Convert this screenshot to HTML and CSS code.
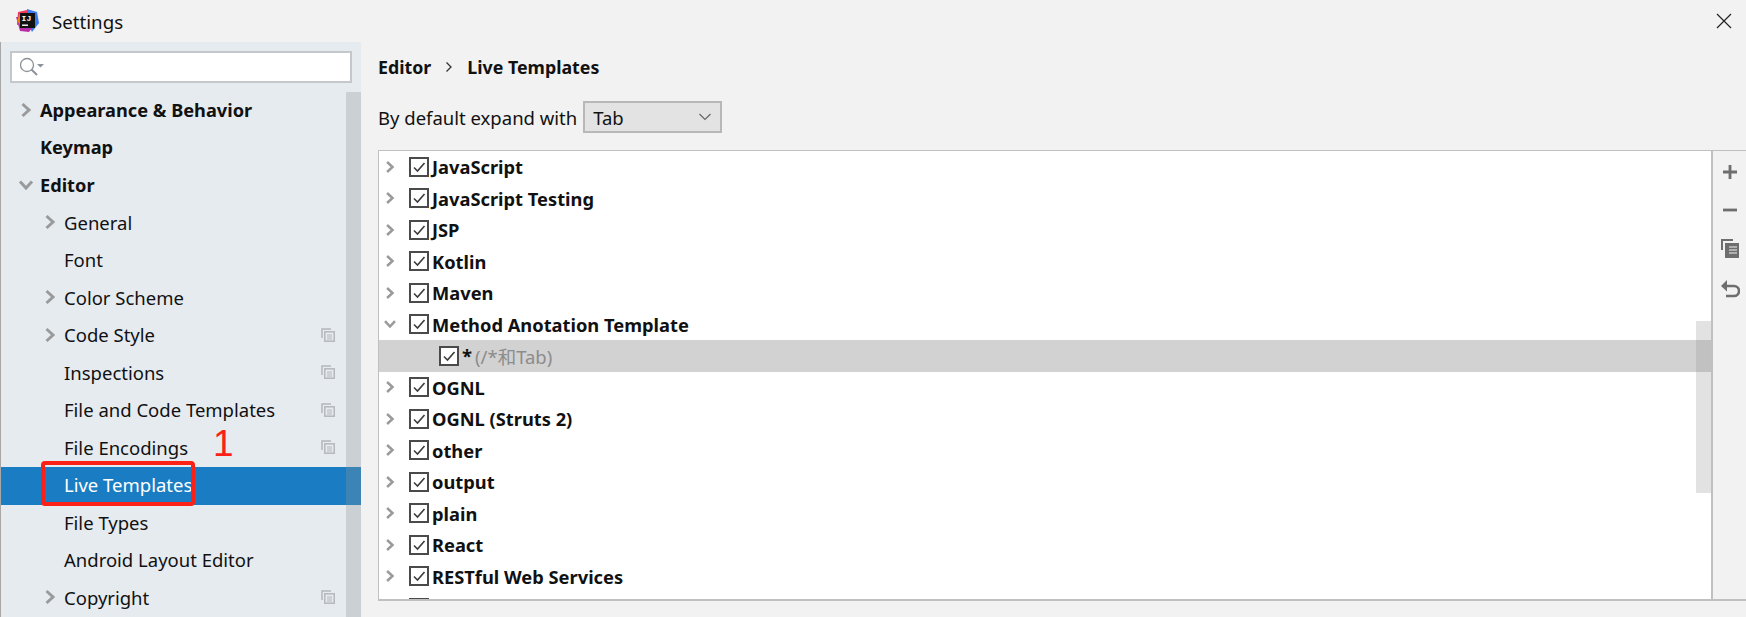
FILE: index.html
```html
<!DOCTYPE html>
<html lang="en">
<head>
    <meta charset="UTF-8">
    <meta name="viewport" content="width=device-width, initial-scale=1.0">
    <title>Settings</title>
    <link rel="stylesheet" href="styles.css">
</head>
<body>
    <svg width="0" height="0" class="defs">
        <symbol id="arrow-right" viewBox="0 0 12 16"><path d="M2.500 2l6.500 6-6.500 6" fill="none" stroke="#9a9a9a" stroke-width="3"/></symbol>
        <symbol id="arrow-down" viewBox="0 0 16 12"><path d="M2 2.500l6 6.500 6-6.500" fill="none" stroke="#9a9a9a" stroke-width="3"/></symbol>
        <symbol id="check" viewBox="0 0 20 20"><rect x="1" y="1" width="18" height="18" fill="#fff" stroke="#4a4a4a" stroke-width="2"/><path d="M5 10.500l3.500 3.500 7-8" fill="none" stroke="#3c3c3c" stroke-width="1.600"/></symbol>
        <symbol id="project" viewBox="0 0 14 14"><path d="M1 10V1h9" fill="none" stroke="#b4b8bc" stroke-width="1.500"/><rect x="3.800" y="3.800" width="9.400" height="9.400" fill="none" stroke="#b4b8bc" stroke-width="1.500"/><path d="M6 7h5M6 9h5M6 11h5" stroke="#b4b8bc"/></symbol>
    </svg>

    <div class="titlebar">
        <svg class="logo" width="24" height="24" viewBox="0 0 24 24">
            <path d="M3 3l9-2 1 12-11 3z" fill="#f5365c"/>
            <path d="M12 0l10 3 2 11-7 9-5-10z" fill="#3d7cf0"/>
            <path d="M1 8l4 14 9 1 3-4-11-11z" fill="#b82ea8"/>
            <path d="M2 12l3-8 5 1-4 12z" fill="#f97a12"/>
            <rect x="5" y="4" width="15" height="15" fill="#111"/>
            <rect x="7" y="15.500" width="6" height="1.400" fill="#fff"/>
            <text x="6.600" y="11.500" class="logo-text">IJ</text>
        </svg>
        <span class="title">Settings</span>
        <svg class="close" width="16" height="16" viewBox="0 0 16 16"><path d="M1 1l14 14M15 1L1 15" stroke="#222" stroke-width="1.200"/></svg>
    </div>

    <div class="content">
        <div class="sidebar">
            <div class="search">
                <svg width="26" height="20" viewBox="0 0 26 20">
                    <circle cx="7" cy="8" r="6.500" fill="none" stroke="#8c9299" stroke-width="1.300"/>
                    <path d="M11.500 12.500l5.500 5.500" stroke="#8c9299" stroke-width="2"/>
                    <path d="M17 7h7l-3.500 3.500z" fill="#8c9299"/>
                </svg>
            </div>
            <div class="nav">
                <div class="nav-scroll"></div>
                <div class="nav-row bold"><svg class="arrow"><use href="#arrow-right"/></svg>Appearance &amp; Behavior</div>
                <div class="nav-row bold"><span class="arrow"></span>Keymap</div>
                <div class="nav-row bold"><svg class="arrow arrow-open"><use href="#arrow-down"/></svg>Editor</div>
                <div class="nav-row sub"><svg class="arrow"><use href="#arrow-right"/></svg>General</div>
                <div class="nav-row sub"><span class="arrow"></span>Font</div>
                <div class="nav-row sub"><svg class="arrow"><use href="#arrow-right"/></svg>Color Scheme</div>
                <div class="nav-row sub"><svg class="arrow"><use href="#arrow-right"/></svg>Code Style<svg class="project"><use href="#project"/></svg></div>
                <div class="nav-row sub"><span class="arrow"></span>Inspections<svg class="project"><use href="#project"/></svg></div>
                <div class="nav-row sub"><span class="arrow"></span>File and Code Templates<svg class="project"><use href="#project"/></svg></div>
                <div class="nav-row sub"><span class="arrow"></span>File Encodings<svg class="project"><use href="#project"/></svg></div>
                <div class="nav-row sub selected"><span class="arrow"></span>Live Templates</div>
                <div class="nav-row sub"><span class="arrow"></span>File Types</div>
                <div class="nav-row sub"><span class="arrow"></span>Android Layout Editor</div>
                <div class="nav-row sub"><svg class="arrow"><use href="#arrow-right"/></svg>Copyright<svg class="project"><use href="#project"/></svg></div>
                <div class="mark-box"></div>
                <div class="mark-num">1</div>
            </div>
        </div>

        <div class="main">
            <div class="breadcrumb">
                <span>Editor</span>
                <svg width="8" height="12" viewBox="0 0 8 12"><path d="M1.500 1.500l4.500 4.500-4.500 4.500" fill="none" stroke="#333" stroke-width="1.300"/></svg>
                <span>Live Templates</span>
            </div>
            <div class="expand">
                <span>By default expand with</span>
                <div class="select">
                    <span>Tab</span>
                    <svg width="14" height="8" viewBox="0 0 14 8"><path d="M1.500 1l5.500 5.500L12.500 1" fill="none" stroke="#666" stroke-width="1.200"/></svg>
                </div>
            </div>
            <div class="panel">
                <div class="tree">
                    <div class="tree-scroll"></div>
                    <div class="tree-row"><svg class="tw"><use href="#arrow-right"/></svg><svg class="cb"><use href="#check"/></svg>JavaScript</div>
                    <div class="tree-row"><svg class="tw"><use href="#arrow-right"/></svg><svg class="cb"><use href="#check"/></svg>JavaScript Testing</div>
                    <div class="tree-row"><svg class="tw"><use href="#arrow-right"/></svg><svg class="cb"><use href="#check"/></svg>JSP</div>
                    <div class="tree-row"><svg class="tw"><use href="#arrow-right"/></svg><svg class="cb"><use href="#check"/></svg>Kotlin</div>
                    <div class="tree-row"><svg class="tw"><use href="#arrow-right"/></svg><svg class="cb"><use href="#check"/></svg>Maven</div>
                    <div class="tree-row"><svg class="tw tw-open"><use href="#arrow-down"/></svg><svg class="cb"><use href="#check"/></svg>Method Anotation Template</div>
                    <div class="tree-row child"><svg class="cb"><use href="#check"/></svg><b>*</b><span class="hint">(/*和Tab)</span></div>
                    <div class="tree-row"><svg class="tw"><use href="#arrow-right"/></svg><svg class="cb"><use href="#check"/></svg>OGNL</div>
                    <div class="tree-row"><svg class="tw"><use href="#arrow-right"/></svg><svg class="cb"><use href="#check"/></svg>OGNL (Struts 2)</div>
                    <div class="tree-row"><svg class="tw"><use href="#arrow-right"/></svg><svg class="cb"><use href="#check"/></svg>other</div>
                    <div class="tree-row"><svg class="tw"><use href="#arrow-right"/></svg><svg class="cb"><use href="#check"/></svg>output</div>
                    <div class="tree-row"><svg class="tw"><use href="#arrow-right"/></svg><svg class="cb"><use href="#check"/></svg>plain</div>
                    <div class="tree-row"><svg class="tw"><use href="#arrow-right"/></svg><svg class="cb"><use href="#check"/></svg>React</div>
                    <div class="tree-row"><svg class="tw"><use href="#arrow-right"/></svg><svg class="cb"><use href="#check"/></svg>RESTful Web Services</div>
                    <div class="tree-row"><svg class="tw"><use href="#arrow-right"/></svg><svg class="cb"><use href="#check"/></svg></div>
                </div>
                <div class="tools">
                    <svg width="18" height="18" viewBox="0 0 18 18"><path d="M9 2v14M2 9h14" stroke="#6e6e6e" stroke-width="2.800"/></svg>
                    <svg width="18" height="18" viewBox="0 0 18 18"><path d="M2 9h14" stroke="#6e6e6e" stroke-width="2.800"/></svg>
                    <svg width="18" height="20" viewBox="0 0 18 20"><path d="M1 11V1h11" fill="none" stroke="#6e6e6e" stroke-width="2"/><rect x="4" y="4" width="14" height="15" fill="#6e6e6e"/><path d="M8 8h8M8 11h8M8 14h8" stroke="#f2f2f2" stroke-width="1.200"/></svg>
                    <svg width="20" height="20" viewBox="0 0 20 20"><path d="M5 7h9a4.500 4.500 0 0 1 0 10H6" fill="none" stroke="#6e6e6e" stroke-width="2.600"/><path d="M7 1L1 7l6 5.500z" fill="#6e6e6e"/></svg>
                </div>
            </div>
        </div>
    </div>
</body>
</html>
```

FILE: styles.css
```css
html, body {
    height: 100%;
}
body {
    margin: 0;
    height: 617px;
    overflow: hidden;
    display: flex;
    flex-direction: column;
    background: #f2f2f2;
    color: #111;
    font-family: "Noto Sans", "Noto Sans CJK SC", sans-serif;
    font-size: 18.5px;
}
.defs {
    display: none;
}

/* title bar */
.titlebar {
    height: 42px;
    flex: none;
    display: flex;
    align-items: center;
    padding-left: 15px;
    padding-right: 14px;
}
.logo {
    margin-right: 13px;
}
.logo-text {
    font-family: "Liberation Mono", monospace;
    font-size: 8px;
    font-weight: bold;
    fill: #fff;
}
.title {
    font-size: 18.7px;
}
.close {
    margin-left: auto;
}

/* left side */
.content {
    flex: 1;
    display: flex;
    min-height: 0;
}
.sidebar {
    width: 360px;
    flex: none;
    background: #e6ebf0;
    border-left: 1px solid #a8a8a8;
    display: flex;
    flex-direction: column;
}
.search {
    height: 33px;
    margin: 9px 9px 0 9px;
    box-sizing: border-box;
    background: #fff;
    border: 2px solid #c4c8cc;
    display: flex;
    align-items: center;
    padding-left: 8px;
}
.nav {
    position: relative;
    flex: 1;
    margin-top: 7px;
    padding-top: 2px;
}
.nav-scroll {
    position: absolute;
    top: 2px;
    right: 0;
    bottom: 0;
    width: 15px;
    background: rgba(140, 145, 150, 0.3);
    z-index: 1;
}
.nav-row {
    height: 37.5px;
    box-sizing: border-box;
    padding-bottom: 2px;
    display: flex;
    align-items: center;
    padding-left: 19px;
    white-space: nowrap;
}
.nav-row.sub {
    padding-left: 43px;
}
.bold {
    font-weight: bold;
    font-size: 18.2px;
}
.arrow {
    width: 12px;
    height: 16px;
    margin-right: 8px;
    flex: none;
}
.arrow-open {
    width: 16px;
    height: 12px;
    margin-left: -2px;
    margin-right: 6px;
}
.project {
    width: 14px;
    height: 14px;
    margin-left: auto;
    margin-right: 26px;
}
.selected {
    background: #1a7dc4;
    color: #fff;
}
.mark-box {
    position: absolute;
    left: 40px;
    top: 371px;
    width: 154px;
    height: 45px;
    box-sizing: border-box;
    border: 4px solid #fb2116;
    border-radius: 4px;
    z-index: 2;
}
.mark-num {
    position: absolute;
    left: 212px;
    top: 335px;
    font-family: "Liberation Sans", sans-serif;
    font-size: 37px;
    line-height: 1;
    color: #fb2116;
}

/* right side */
.main {
    flex: 1;
    min-width: 0;
    display: flex;
    flex-direction: column;
    padding-left: 17px;
}
.breadcrumb {
    display: flex;
    align-items: center;
    gap: 14px;
    height: 50px;
    font-weight: bold;
    font-size: 17.8px;
}
.expand {
    display: flex;
    align-items: center;
    gap: 6px;
    margin-top: 9px;
}
.select {
    width: 139px;
    height: 32px;
    box-sizing: border-box;
    background: #e3e3e3;
    border: 2px solid #b8b8b8;
    display: flex;
    align-items: center;
    justify-content: space-between;
    padding: 0 8px;
}
.panel {
    flex: 1;
    min-height: 0;
    display: flex;
    margin-top: 17px;
    margin-bottom: 16px;
    border: 1px solid #c0c0c0;
    border-bottom-width: 2px;
    border-right: none;
}
.tree {
    position: relative;
    flex: 1;
    background: #fff;
    overflow: hidden;
}
.tree-scroll {
    position: absolute;
    right: 0;
    top: 170px;
    width: 15px;
    height: 172px;
    background: rgba(150, 150, 150, 0.28);
    z-index: 1;
}
.tree-row {
    height: 31.5px;
    display: flex;
    align-items: center;
    padding-left: 6px;
    font-weight: bold;
    font-size: 18.3px;
    white-space: nowrap;
}
.tree-row.child {
    padding-left: 60px;
    background: #d2d2d2;
    font-weight: normal;
    font-size: 18.5px;
}
.tw {
    width: 10px;
    height: 14px;
    margin-right: 14px;
    flex: none;
}
.tw-open {
    width: 14px;
    height: 10px;
    margin-left: -2px;
    margin-right: 12px;
}
.cb {
    width: 20px;
    height: 20px;
    margin-right: 3px;
    flex: none;
}
.hint {
    color: #8c8c8c;
    margin-left: 3px;
}
.tools {
    width: 35px;
    flex: none;
    box-sizing: border-box;
    border-left: 2px solid #c0c0c0;
    display: flex;
    flex-direction: column;
    align-items: center;
    gap: 20px;
    padding-top: 12px;
}
```
